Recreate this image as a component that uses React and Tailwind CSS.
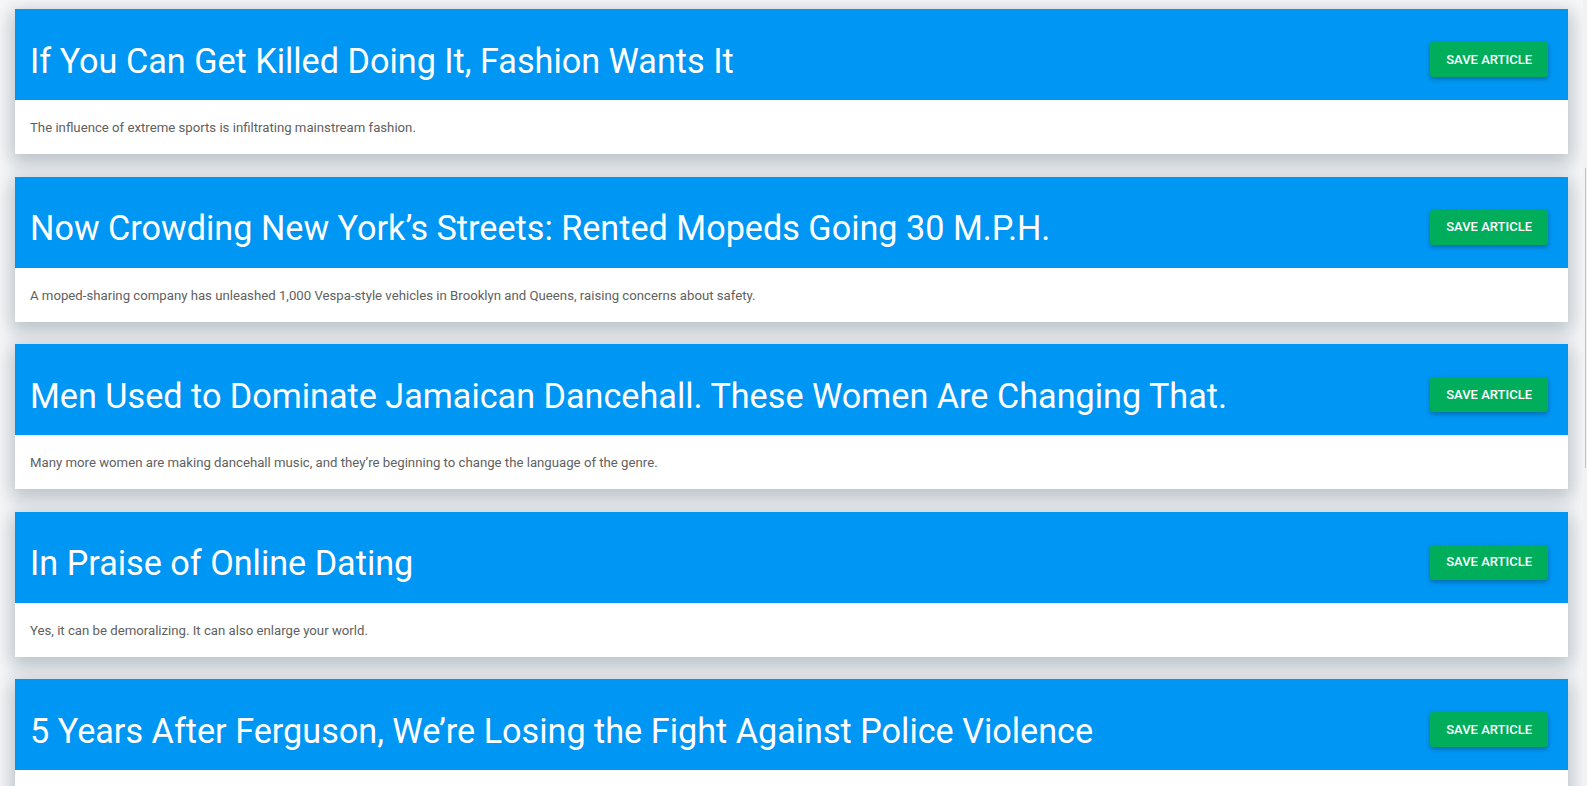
import React from 'react';

const articles = [
    {
        title: 'If You Can Get Killed Doing It, Fashion Wants It',
        summary: 'The influence of extreme sports is infiltrating mainstream fashion.',
    },
    {
        title: 'Now Crowding New York\u2019s Streets: Rented Mopeds Going 30 M.P.H.',
        summary: 'A moped-sharing company has unleashed 1,000 Vespa-style vehicles in Brooklyn and Queens, raising concerns about safety.',
    },
    {
        title: 'Men Used to Dominate Jamaican Dancehall. These Women Are Changing That.',
        summary: 'Many more women are making dancehall music, and they\u2019re beginning to change the language of the genre.',
    },
    {
        title: 'In Praise of Online Dating',
        summary: 'Yes, it can be demoralizing. It can also enlarge your world.',
    },
    {
        title: '5 Years After Ferguson, We\u2019re Losing the Fight Against Police Violence',
        summary: 'Activists say the movement has stalled as killings by police continue at roughly the same rate.',
    },
];

const ArticleCard = ({ article }) => (
    <div className="bg-white shadow-[0_6px_18px_4px_rgba(60,80,100,0.32)] mb-[22.5px]">
        <div className="bg-[#0096f3] h-[91px] pt-[10px] pl-[15px] pr-[20px] flex items-center justify-between">
            <h2 className="text-white text-[34.2px] leading-[1.2] font-normal mt-[4px]">{article.title}</h2>
            <button className="bg-[#00ad5a] text-white text-[13px] font-medium uppercase rounded-[3px] h-[35px] px-[16px] shadow-[0_2px_4px_rgba(0,0,0,0.3)]">
                Save Article
            </button>
        </div>
        <div className="h-[54px] px-[15px] pt-[2px] flex items-center">
            <p className="text-[13.2px] text-[#616161]">{article.summary}</p>
        </div>
    </div>
);

const App = () => {
    return (
        <div className="h-[786px] overflow-hidden bg-[#f7f8f9] flex" style={{ fontFamily: 'Roboto, "Liberation Sans", sans-serif' }}>
            <div className="flex-1 px-[15px] pt-[9px]">
                {articles.map((article, i) => (
                    <ArticleCard key={i} article={article} />
                ))}
            </div>
            {/* thin scrollbar strip on the right */}
            <div className="w-[4px] bg-[#f1f2f4] pt-[168px]">
                <div className="w-[1px] h-[300px] ml-[2px] bg-[#c4c4c4]" />
            </div>
        </div>
    );
};

export default App;
